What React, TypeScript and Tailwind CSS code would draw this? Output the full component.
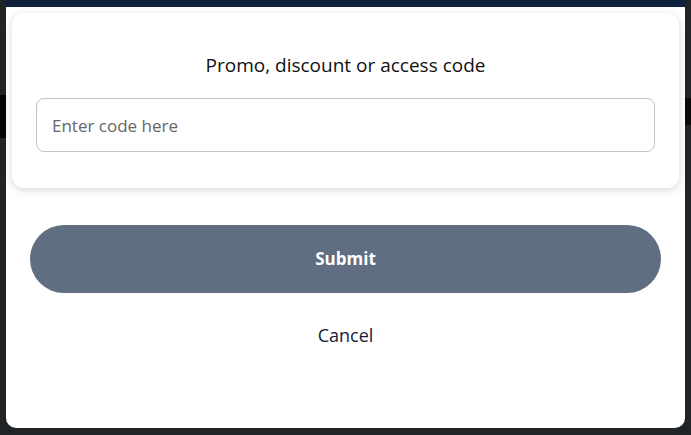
export default function App() {
  return (
    <main
      className="flex h-[435px] w-full bg-[#202427]"
      style={{ fontFamily: "'Open Sans', Lato, sans-serif" }}
    >
      {/* left gutter: page behind the modal */}
      <div className="flex w-[6px] flex-col">
        <div className="h-[95px] bg-[#202427]" />
        <div className="h-[43px] bg-[#050505]" />
        <div className="flex-1 bg-[#202427]" />
      </div>

      <div className="flex flex-1 flex-col">
        <div className="h-[7px] bg-[#0f213d]" />
        <div className="flex h-[421px] flex-col rounded-b-[10px] bg-white p-[6px]">
          {/* code card */}
          <div className="flex flex-col rounded-[12px] bg-white px-[24px] pb-[36px] pt-[40px] shadow-[0_2px_8px_rgba(0,0,0,0.16)]">
            <h2 className="text-center text-[19px] leading-[24px] text-[#111111]">
              Promo, discount or access code
            </h2>
            <input
              type="text"
              placeholder="Enter code here"
              className="mt-[21px] h-[54px] w-full rounded-[8px] border border-[#c4c4c4] px-[15px] text-[17px] text-[#222] outline-none placeholder:text-[#666666]"
            />
          </div>

          <div className="flex flex-col px-[18px]">
            <button className="mt-[37px] h-[68px] w-full rounded-full bg-[#5f6e80] text-[17px] font-bold text-white">
              Submit
            </button>
            <button className="mt-[30px] h-[24px] text-[18px] leading-[24px] text-[#14213a]">
              Cancel
            </button>
          </div>
        </div>
      </div>

      {/* right gutter */}
      <div className="flex w-[6px] flex-col">
        <div className="h-[98px] bg-[#202427]" />
        <div className="h-[27px] bg-[#0a0a0a]" />
        <div className="flex-1 bg-[#202427]" />
      </div>
    </main>
  )
}
